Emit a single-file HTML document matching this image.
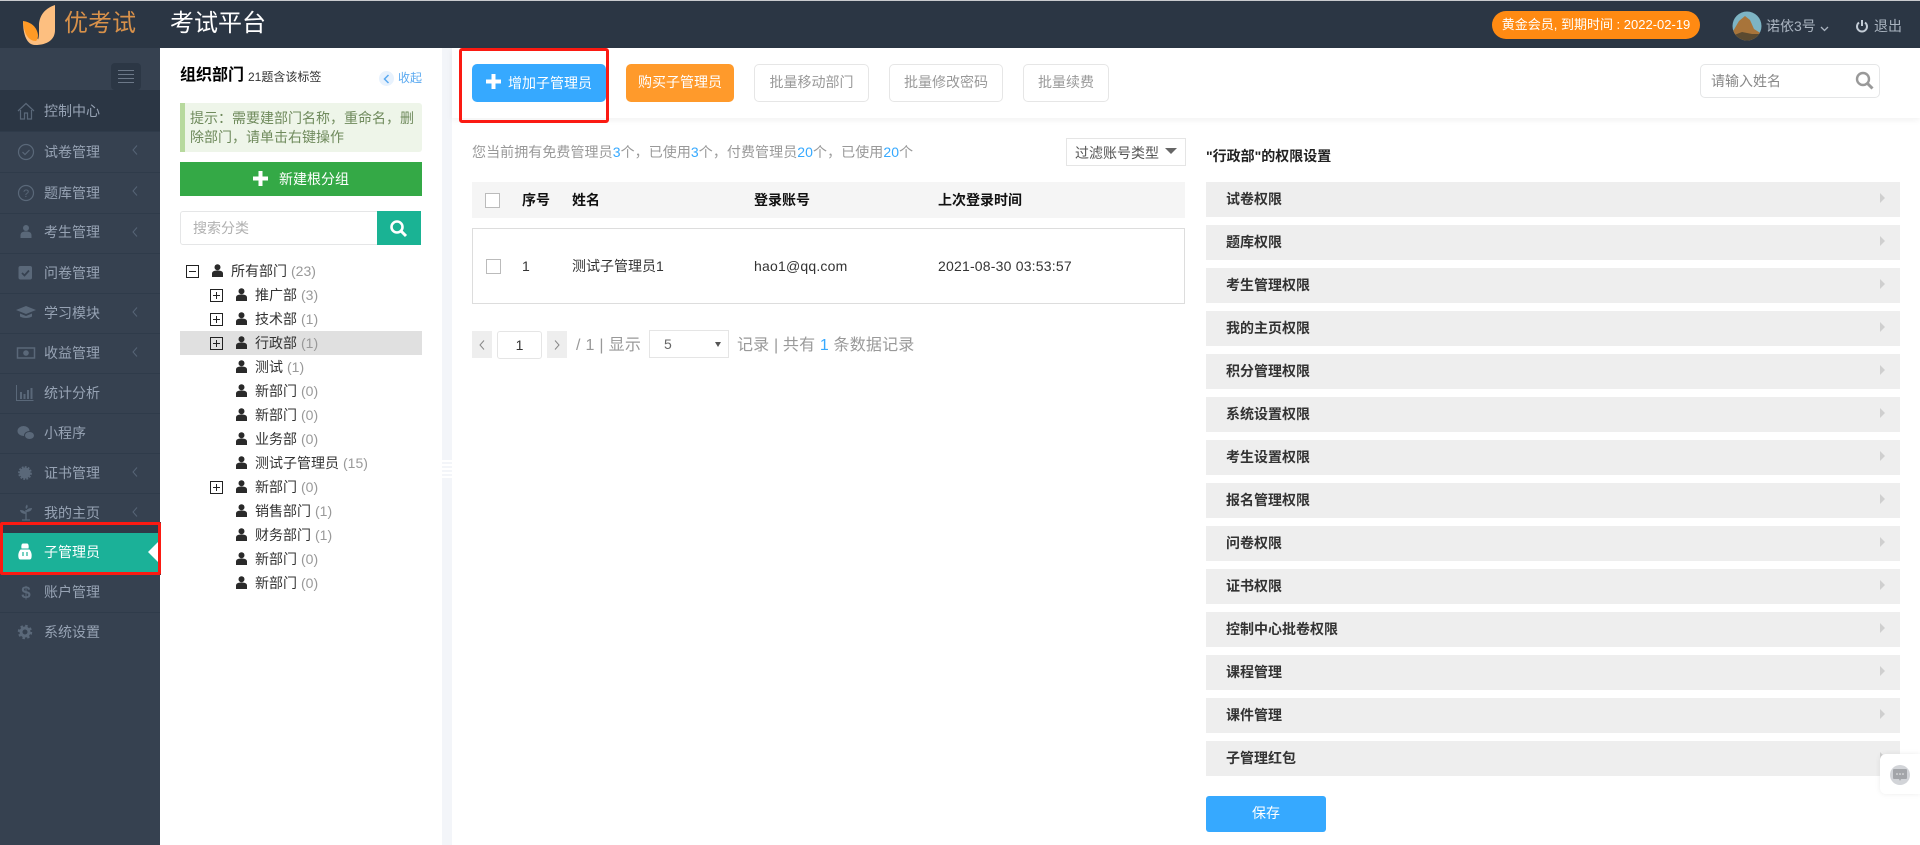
<!DOCTYPE html>
<html lang="zh"><head><meta charset="utf-8"><title>考试平台</title>
<style>
*{box-sizing:border-box;margin:0;padding:0}
html,body{width:1920px;height:845px;overflow:hidden;background:#fff;font-family:"Liberation Sans","Noto Sans CJK SC",sans-serif;font-size:14px;color:#333}
.a{position:absolute}
.t{position:absolute;line-height:20px;height:20px;white-space:nowrap}
.b{font-weight:bold}
.nav{position:absolute;left:44px;line-height:20px;color:#97a3b4;white-space:nowrap}
.div{position:absolute;left:0;width:160px;height:1px;background:#2f3b4a}
.ch{position:absolute;left:132px}
.ic{position:absolute;left:16px;width:20px;height:20px}
.g{position:absolute;top:64px;height:38px;border:1px solid #e6e6e6;border-radius:5px;color:#999;text-align:center;line-height:35px;background:#fff}
.row{position:absolute;left:1206px;width:694px;height:35px;background:#eee;font-weight:bold;font-size:14px;line-height:34px;padding-left:20px;color:#333}
.row:after{content:"";position:absolute;left:674px;top:11px;border-left:5px solid #cfcfcf;border-top:5px solid transparent;border-bottom:5px solid transparent}
.plus{position:absolute;width:13px;height:13px;border:1px solid #222}
.plus:before{content:"";position:absolute;left:2px;top:5px;width:7px;height:1px;background:#222}
.plus.p:after{content:"";position:absolute;left:5px;top:2px;width:1px;height:7px;background:#222}
.tn{position:absolute;line-height:20px;white-space:nowrap;color:#333}
.tn i{font-style:normal;color:#999;margin-left:4px}
.pi{position:absolute;width:11px;height:13px}
.blue{color:#36a9ff}
</style></head><body>

<!-- header -->
<div class="a" style="left:0;top:0;width:1920px;height:1px;background:#c9cbce"></div>
<div class="a" style="left:0;top:1px;width:1920px;height:47px;background:#2b3644"></div>
<svg class="a" style="left:0;top:0" width="60" height="48" viewBox="0 0 60 48">
<path d="M55 5C46 8 40 14 39 24v9c0 5-1 8-4 12 12 0 20-5 20-15z" fill="#fdbf80"/>
<path d="M23 21c0 14 4 24 12 24 2-1 3-3 3-6z" fill="#fdbf80"/>
<path d="M23 21c8 1 14 6 15 14 0 3-1 5-2 6-7 0-12-6-13-20z" fill="#ff9a25"/>
</svg>
<div class="t" style="left:64px;top:9px;font-size:24px;line-height:30px;height:30px;color:#d8914a">优考试</div>
<div class="t" style="left:170px;top:9px;font-size:24px;line-height:30px;height:30px;color:#fff">考试平台</div>
<div class="a" style="left:1492px;top:11px;width:208px;height:28px;border-radius:14px;background:#ff8a12;color:#fff;text-align:center;line-height:27px;font-size:13px">黄金会员, 到期时间 : 2022-02-19</div>
<svg class="a" style="left:1732px;top:11px" width="30" height="30" viewBox="0 0 30 30"><defs><clipPath id="c"><circle cx="15" cy="15" r="14.5"/></clipPath></defs><g clip-path="url(#c)"><rect width="30" height="30" fill="#7db4c4"/><path d="M0 22 7 10l6-5 5 4 4 9 8 5v7H0z" fill="#a8743a"/><path d="M0 25l10-4 10 2 10 0v7H0z" fill="#5b4a30"/></g></svg>
<div class="t" style="left:1766px;top:16px;color:#aab4c0">诺依3号</div>
<svg class="a" style="left:1820px;top:26px" width="9" height="6" viewBox="0 0 9 6"><path d="M1 1l3.500 3.500L8 1" fill="none" stroke="#aab4c0" stroke-width="1.300"/></svg>
<svg class="a" style="left:1855px;top:19px" width="14" height="14" viewBox="0 0 14 14"><path d="M4 3.500a5 5 0 1 0 6 0" fill="none" stroke="#c3ccd6" stroke-width="2"/><path d="M7 1v6" stroke="#c3ccd6" stroke-width="2"/></svg>
<div class="t" style="left:1874px;top:16px;color:#aab4c0">退出</div>

<!-- sidebar -->
<div class="a" style="left:0;top:48px;width:160px;height:797px;background:#364150"></div>
<div class="a" style="left:111px;top:63px;width:30px;height:27px;background:#2c3745;border-radius:4px"></div>
<div class="a" style="left:118px;top:70px;width:16px;height:1px;background:#6c7888"></div>
<div class="a" style="left:118px;top:74px;width:16px;height:1px;background:#6c7888"></div>
<div class="a" style="left:118px;top:78px;width:16px;height:1px;background:#6c7888"></div>
<div class="a" style="left:118px;top:82px;width:16px;height:1px;background:#6c7888"></div>
<div class="a" style="left:0;top:90px;width:160px;height:41px;background:#2b3644"></div>

<div class="div" style="top:131px"></div><div class="div" style="top:172px"></div><div class="div" style="top:213px"></div><div class="div" style="top:253px"></div><div class="div" style="top:293px"></div><div class="div" style="top:333px"></div><div class="div" style="top:373px"></div><div class="div" style="top:413px"></div><div class="div" style="top:453px"></div><div class="div" style="top:493px"></div><div class="div" style="top:612px"></div>

<div class="nav" style="top:101px">控制中心</div>
<div class="nav" style="top:142px">试卷管理</div>
<div class="nav" style="top:183px">题库管理</div>
<div class="nav" style="top:222px">考生管理</div>
<div class="nav" style="top:263px">问卷管理</div>
<div class="nav" style="top:303px">学习模块</div>
<div class="nav" style="top:343px">收益管理</div>
<div class="nav" style="top:383px">统计分析</div>
<div class="nav" style="top:423px">小程序</div>
<div class="nav" style="top:463px">证书管理</div>
<div class="nav" style="top:503px">我的主页</div>
<div class="nav" style="top:582px">账户管理</div>
<div class="nav" style="top:622px">系统设置</div>

<svg class="ch" style="top:145px" width="6" height="10" viewBox="0 0 6 10"><path d="M5 .5 1 5l4 4.500" fill="none" stroke="#566476"/></svg>
<svg class="ch" style="top:186px" width="6" height="10" viewBox="0 0 6 10"><path d="M5 .5 1 5l4 4.500" fill="none" stroke="#566476"/></svg>
<svg class="ch" style="top:227px" width="6" height="10" viewBox="0 0 6 10"><path d="M5 .5 1 5l4 4.500" fill="none" stroke="#566476"/></svg>
<svg class="ch" style="top:307px" width="6" height="10" viewBox="0 0 6 10"><path d="M5 .5 1 5l4 4.500" fill="none" stroke="#566476"/></svg>
<svg class="ch" style="top:347px" width="6" height="10" viewBox="0 0 6 10"><path d="M5 .5 1 5l4 4.500" fill="none" stroke="#566476"/></svg>
<svg class="ch" style="top:467px" width="6" height="10" viewBox="0 0 6 10"><path d="M5 .5 1 5l4 4.500" fill="none" stroke="#566476"/></svg>
<svg class="ch" style="top:507px" width="6" height="10" viewBox="0 0 6 10"><path d="M5 .5 1 5l4 4.500" fill="none" stroke="#566476"/></svg>

<svg class="ic" style="top:101px" viewBox="0 0 20 20"><path d="M2 10 10 2.500 18 10M4.500 9v9h4v-6h3v6h4V9" fill="none" stroke="#5a6879" stroke-width="1.200"/></svg>
<svg class="ic" style="top:142px" viewBox="0 0 20 20"><circle cx="10" cy="10" r="7.500" fill="none" stroke="#5a6879" stroke-width="1.200"/><path d="M6.500 10l2.500 2.500 4.500-4.500" fill="none" stroke="#5a6879" stroke-width="1.200"/></svg>
<svg class="ic" style="top:183px" viewBox="0 0 20 20"><circle cx="10" cy="10" r="7.500" fill="none" stroke="#5a6879" stroke-width="1.200"/><text x="10" y="14" font-size="11" text-anchor="middle" fill="#5a6879" font-family="Liberation Sans">?</text></svg>
<svg class="ic" style="top:222px" viewBox="0 0 20 20"><circle cx="10" cy="6" r="3" fill="#5a6879"/><path d="M4.500 16v-2.500c0-3 2-4 5.500-4s5.500 1 5.500 4V16z" fill="#5a6879"/></svg>
<svg class="ic" style="top:263px" viewBox="0 0 20 20"><rect x="2.500" y="3" width="13.500" height="13.500" rx="2" fill="#5a6879"/><path d="M6 10l2.500 2.500L13 7.500" fill="none" stroke="#364150" stroke-width="1.800"/></svg>
<svg class="ic" style="top:303px;left:15px;width:22px" viewBox="0 0 22 20"><path d="M1 7l10-4 10 4-10 4z" fill="#5a6879"/><path d="M5 10.500v3c3 2 9 2 12 0v-3l-6 2.500z" fill="#5a6879"/></svg>
<svg class="ic" style="top:343px;left:16px;width:20px" viewBox="0 0 20 20"><rect x="1.500" y="5" width="17" height="10" fill="none" stroke="#5a6879" stroke-width="1.500"/><circle cx="10" cy="10" r="2.800" fill="#5a6879"/></svg>
<svg class="ic" style="top:383px;left:15px" viewBox="0 0 20 20"><path d="M1.500 2v15.500h17" fill="none" stroke="#5a6879"/><path d="M5 9h2v7H5zM8.500 11h2v5h-2zM12 7h2v9h-2zM15.500 5h2v11h-2z" fill="#5a6879"/></svg>
<svg class="ic" style="top:423px" viewBox="0 0 20 20"><ellipse cx="7.500" cy="8" rx="6" ry="5" fill="#5a6879"/><ellipse cx="13.500" cy="12.500" rx="5" ry="4" fill="#5a6879" stroke="#364150"/></svg>
<svg class="ic" style="top:463px;left:15px" viewBox="0 0 20 20"><circle cx="10" cy="10" r="5.500" fill="#5a6879"/><circle cx="10" cy="10" r="6" fill="none" stroke="#5a6879" stroke-width="1.800" stroke-dasharray="1.800 1.300"/></svg>
<svg class="ic" style="top:503px" viewBox="0 0 20 20"><path d="M10 7v10M6 17h8" stroke="#5a6879" stroke-width="1.300"/><path d="M10 11C7 11 4 9.500 4 7c3.500 0 6 1.500 6 4zM10 9c0-2.500 2.500-4 6-4 0 2.500-2.500 4-6 4zM10 6c-1-2 0-3.500 1-4.500 1 1.500 1 3.500-1 4.500z" fill="#5a6879"/></svg>
<svg class="ic" style="top:582px" viewBox="0 0 20 20"><text x="10" y="16" font-size="17" font-weight="bold" text-anchor="middle" fill="#5a6879" font-family="Liberation Sans">$</text></svg>
<svg class="ic" style="top:622px;left:15px" viewBox="0 0 20 20"><circle cx="10" cy="10" r="4" fill="none" stroke="#5a6879" stroke-width="3"/><circle cx="10" cy="10" r="6.200" fill="none" stroke="#5a6879" stroke-width="2" stroke-dasharray="2.500 2.370"/></svg>

<!-- active -->
<div class="a" style="left:0;top:522px;width:161px;height:53px;background:#2f3a48"></div>
<div class="a" style="left:0;top:533px;width:161px;height:40px;background:#1bb198"></div>
<div class="a" style="left:148px;top:542px;border-right:10px solid #fff;border-top:10px solid transparent;border-bottom:10px solid transparent"></div>
<div class="a" style="left:0;top:522px;width:161px;height:53px;border:3px solid #fb1a12;border-radius:2px"></div>
<div class="nav" style="top:542px;color:#fff">子管理员</div>
<svg class="ic" style="top:542px;left:15px" viewBox="0 0 20 20"><path d="M6.500 6.500C6 4 6.500 1.500 8 1.500h4c1.500 0 2 2.500 1.500 5zM5.500 7.500h9c2 2.500 2.500 5 2 8-.3 1.500-1 2-2 2h-9c-1 0-1.700-.5-2-2-.5-3 0-5.500 2-8z" fill="#fff"/><path d="M8 10v4M12 10v4" stroke="#1bb198" stroke-width="1.200"/></svg>

<!-- middle panel -->
<div class="a" style="left:442px;top:48px;width:10px;height:797px;background:#f3f5f9"></div>
<div class="a" style="left:442px;top:460px;width:10px;height:19px;background:repeating-linear-gradient(#fff 0 2px,#f3f5f9 2px 4px)"></div>
<div class="t b" style="left:180px;top:66px;font-size:16px;color:#000">组织部门</div>
<div class="t" style="left:248px;top:67px;font-size:12px;color:#333">21题含该标签</div>
<div class="a" style="left:379px;top:71px;width:15px;height:15px;border-radius:50%;background:#e8f2fd"></div>
<svg class="a" style="left:383px;top:74px" width="7" height="10" viewBox="0 0 7 10"><path d="M5.500 1 1.500 5l4 4" fill="none" stroke="#5aa9f0" stroke-width="1.500"/></svg>
<div class="t" style="left:398px;top:68px;font-size:12px;color:#5aa9f0">收起</div>

<div class="a" style="left:180px;top:103px;width:242px;height:49px;background:#eef5e9;border-left:5px solid #b7d99d;border-radius:0 3px 3px 0;color:#6f8a5c;font-size:14px;line-height:19px;padding:6px 0 0 5px">提示：需要建部门名称，重命名，删除部门，请单击右键操作</div>
<div class="a" style="left:180px;top:162px;width:242px;height:34px;background:#34a946"></div>
<svg class="a" style="left:253px;top:171px" width="15" height="15" viewBox="0 0 15 15"><path d="M5.500 0h4v5.500H15v4H9.500V15h-4V9.500H0v-4h5.500z" fill="#fff"/></svg>
<div class="t" style="left:279px;top:169px;color:#fff">新建根分组</div>
<div class="a" style="left:180px;top:211px;width:198px;height:34px;border:1px solid #e5e6e7;border-radius:3px 0 0 3px"></div>
<div class="t" style="left:193px;top:218px;color:#b0b0b0">搜索分类</div>
<div class="a" style="left:377px;top:211px;width:44px;height:34px;background:#1ab394"></div>
<svg class="a" style="left:389px;top:219px" width="19" height="19" viewBox="0 0 19 19"><circle cx="8" cy="8" r="5.500" fill="none" stroke="#fff" stroke-width="2.600"/><path d="M12 12l5 5" stroke="#fff" stroke-width="3"/></svg>

<!-- tree -->
<div class="a" style="left:180px;top:331px;width:242px;height:24px;background:#e0e0e0"></div>
<div class="plus" style="left:186px;top:265px"></div>
<div class="plus p" style="left:210px;top:289px"></div>
<div class="plus p" style="left:210px;top:313px"></div>
<div class="plus p" style="left:210px;top:337px"></div>
<div class="plus p" style="left:210px;top:481px"></div>

<svg width="0" height="0" style="position:absolute"><symbol id="p" viewBox="0 0 11 13"><circle cx="5.500" cy="3.200" r="3" fill="#2a2a2a"/><path d="M0 13V9.500C0 7.500 2 6.500 5.500 6.500S11 7.500 11 9.500V13z" fill="#2a2a2a"/></symbol></svg>
<svg class="pi" style="left:212px;top:264px"><use href="#p"/></svg>
<svg class="pi" style="left:236px;top:288px"><use href="#p"/></svg>
<svg class="pi" style="left:236px;top:312px"><use href="#p"/></svg>
<svg class="pi" style="left:236px;top:336px"><use href="#p"/></svg>
<svg class="pi" style="left:236px;top:360px"><use href="#p"/></svg>
<svg class="pi" style="left:236px;top:384px"><use href="#p"/></svg>
<svg class="pi" style="left:236px;top:408px"><use href="#p"/></svg>
<svg class="pi" style="left:236px;top:432px"><use href="#p"/></svg>
<svg class="pi" style="left:236px;top:456px"><use href="#p"/></svg>
<svg class="pi" style="left:236px;top:480px"><use href="#p"/></svg>
<svg class="pi" style="left:236px;top:504px"><use href="#p"/></svg>
<svg class="pi" style="left:236px;top:528px"><use href="#p"/></svg>
<svg class="pi" style="left:236px;top:552px"><use href="#p"/></svg>
<svg class="pi" style="left:236px;top:576px"><use href="#p"/></svg>

<div class="tn" style="left:231px;top:261px">所有部门<i>(23)</i></div>
<div class="tn" style="left:255px;top:285px">推广部<i>(3)</i></div>
<div class="tn" style="left:255px;top:309px">技术部<i>(1)</i></div>
<div class="tn" style="left:255px;top:333px">行政部<i>(1)</i></div>
<div class="tn" style="left:255px;top:357px">测试<i>(1)</i></div>
<div class="tn" style="left:255px;top:381px">新部门<i>(0)</i></div>
<div class="tn" style="left:255px;top:405px">新部门<i>(0)</i></div>
<div class="tn" style="left:255px;top:429px">业务部<i>(0)</i></div>
<div class="tn" style="left:255px;top:453px">测试子管理员<i>(15)</i></div>
<div class="tn" style="left:255px;top:477px">新部门<i>(0)</i></div>
<div class="tn" style="left:255px;top:501px">销售部门<i>(1)</i></div>
<div class="tn" style="left:255px;top:525px">财务部门<i>(1)</i></div>
<div class="tn" style="left:255px;top:549px">新部门<i>(0)</i></div>
<div class="tn" style="left:255px;top:573px">新部门<i>(0)</i></div>

<!-- toolbar -->
<div class="a" style="left:452px;top:48px;width:1468px;height:70px;background:#fff;box-shadow:0 2px 6px rgba(0,0,0,.06)"></div>
<div class="a" style="left:472px;top:64px;width:134px;height:38px;background:#36a9ff;border-radius:5px"></div>
<svg class="a" style="left:486px;top:74px" width="15" height="15" viewBox="0 0 15 15"><path d="M5.500 0h4v5.500H15v4H9.500V15h-4V9.500H0v-4h5.500z" fill="#fff"/></svg>
<div class="t" style="left:508px;top:73px;color:#fff">增加子管理员</div>
<div class="a" style="left:626px;top:64px;width:108px;height:38px;background:#ff9a2b;border-radius:5px;color:#fff;text-align:center;line-height:37px">购买子管理员</div>
<div class="g" style="left:754px;width:115px">批量移动部门</div>
<div class="g" style="left:889px;width:114px">批量修改密码</div>
<div class="g" style="left:1023px;width:86px">批量续费</div>
<div class="a" style="left:459px;top:48px;width:150px;height:75px;border:3px solid #fb1a12;border-radius:3px"></div>
<div class="a" style="left:1700px;top:64px;width:180px;height:34px;border:1px solid #e5e6e7;border-radius:5px"></div>
<div class="t" style="left:1711px;top:71px;color:#888">请输入姓名</div>
<svg class="a" style="left:1855px;top:71px" width="19" height="19" viewBox="0 0 19 19"><circle cx="8" cy="8" r="6" fill="none" stroke="#999" stroke-width="2.400"/><path d="M12.500 12.500l5 5" stroke="#999" stroke-width="3"/></svg>

<!-- content -->
<div class="t" style="left:472px;top:142px;color:#999;letter-spacing:.07px">您当前拥有免费管理员<span class="blue">3</span>个，已使用<span class="blue">3</span>个，付费管理员<span class="blue">20</span>个，已使用<span class="blue">20</span>个</div>
<div class="a" style="left:1066px;top:138px;width:120px;height:28px;border:1px solid #e5e5e5"></div>
<div class="t" style="left:1075px;top:143px;color:#555">过滤账号类型</div>
<div class="a" style="left:1165px;top:148px;border-top:6px solid #666;border-left:6px solid transparent;border-right:6px solid transparent"></div>

<div class="a" style="left:472px;top:182px;width:713px;height:36px;background:#f5f5f5"></div>
<div class="a" style="left:485px;top:193px;width:15px;height:15px;border:1px solid #bbb;background:#fff"></div>
<div class="t b" style="left:522px;top:190px;color:#111">序号</div>
<div class="t b" style="left:572px;top:190px;color:#111">姓名</div>
<div class="t b" style="left:754px;top:190px;color:#111">登录账号</div>
<div class="t b" style="left:938px;top:190px;color:#111">上次登录时间</div>

<div class="a" style="left:472px;top:228px;width:713px;height:76px;border:1px solid #ddd"></div>
<div class="a" style="left:486px;top:259px;width:15px;height:15px;border:1px solid #bbb"></div>
<div class="t" style="left:522px;top:256px">1</div>
<div class="t" style="left:572px;top:256px">测试子管理员1</div>
<div class="t" style="left:754px;top:256px;letter-spacing:.2px">hao1@qq.com</div>
<div class="t" style="left:938px;top:256px;letter-spacing:.2px">2021-08-30 03:53:57</div>

<!-- pager -->
<div class="a" style="left:472px;top:331px;width:20px;height:27px;background:#eee"></div>
<svg class="a" style="left:479px;top:340px" width="6" height="10" viewBox="0 0 6 10"><path d="M5 .5 1 5l4 4.500" fill="none" stroke="#888"/></svg>
<div class="a" style="left:497px;top:331px;width:45px;height:28px;border:1px solid #e5e5e5;border-radius:3px;text-align:center;line-height:27px">1</div>
<div class="a" style="left:547px;top:331px;width:20px;height:27px;background:#eee"></div>
<svg class="a" style="left:554px;top:340px" width="6" height="10" viewBox="0 0 6 10"><path d="M1 .5 5 5l-4 4.500" fill="none" stroke="#888"/></svg>
<div class="t" style="left:576px;top:336px;font-size:16px;color:#999;letter-spacing:.3px">/ 1 | 显示</div>
<div class="a" style="left:649px;top:330px;width:80px;height:28px;border:1px solid #e5e5e5"></div>
<div class="t" style="left:664px;top:334px;color:#666">5</div>
<div class="a" style="left:715px;top:342px;border-top:5px solid #555;border-left:3px solid transparent;border-right:3px solid transparent"></div>
<div class="t" style="left:737px;top:336px;font-size:16px;color:#999;letter-spacing:.17px">记录 | 共有 <span class="blue">1</span> 条数据记录</div>

<!-- permissions -->
<div class="t b" style="left:1206px;top:146px;font-size:14px;color:#222">"行政部"的权限设置</div>
<div class="row" style="top:182px">试卷权限</div>
<div class="row" style="top:225px">题库权限</div>
<div class="row" style="top:268px">考生管理权限</div>
<div class="row" style="top:311px">我的主页权限</div>
<div class="row" style="top:354px">积分管理权限</div>
<div class="row" style="top:397px">系统设置权限</div>
<div class="row" style="top:440px">考生设置权限</div>
<div class="row" style="top:483px">报名管理权限</div>
<div class="row" style="top:526px">问卷权限</div>
<div class="row" style="top:569px">证书权限</div>
<div class="row" style="top:612px">控制中心批卷权限</div>
<div class="row" style="top:655px">课程管理</div>
<div class="row" style="top:698px">课件管理</div>
<div class="row" style="top:741px">子管理红包</div>
<div class="a" style="left:1206px;top:796px;width:120px;height:36px;background:#36a9ff;border-radius:3px;color:#fff;text-align:center;line-height:35px">保存</div>

<!-- chat -->
<div class="a" style="left:1880px;top:754px;width:40px;height:40px;background:#fff;border-radius:6px 0 0 6px;box-shadow:0 0 6px rgba(0,0,0,.08)"></div>
<div class="a" style="left:1890px;top:765px;width:20px;height:20px;border-radius:50%;background:#d2d4d8"></div>
<svg class="a" style="left:1892px;top:768px" width="16" height="15" viewBox="0 0 16 15"><path d="M2 1h12a1 1 0 0 1 1 1v8a1 1 0 0 1-1 1H9l-1 2-1-2H2a1 1 0 0 1-1-1V2a1 1 0 0 1 1-1z" fill="#a3a5a9"/><circle cx="5" cy="6" r=".8" fill="#eee"/><circle cx="8" cy="6" r=".8" fill="#eee"/><circle cx="11" cy="6" r=".8" fill="#eee"/></svg>
</body></html>
